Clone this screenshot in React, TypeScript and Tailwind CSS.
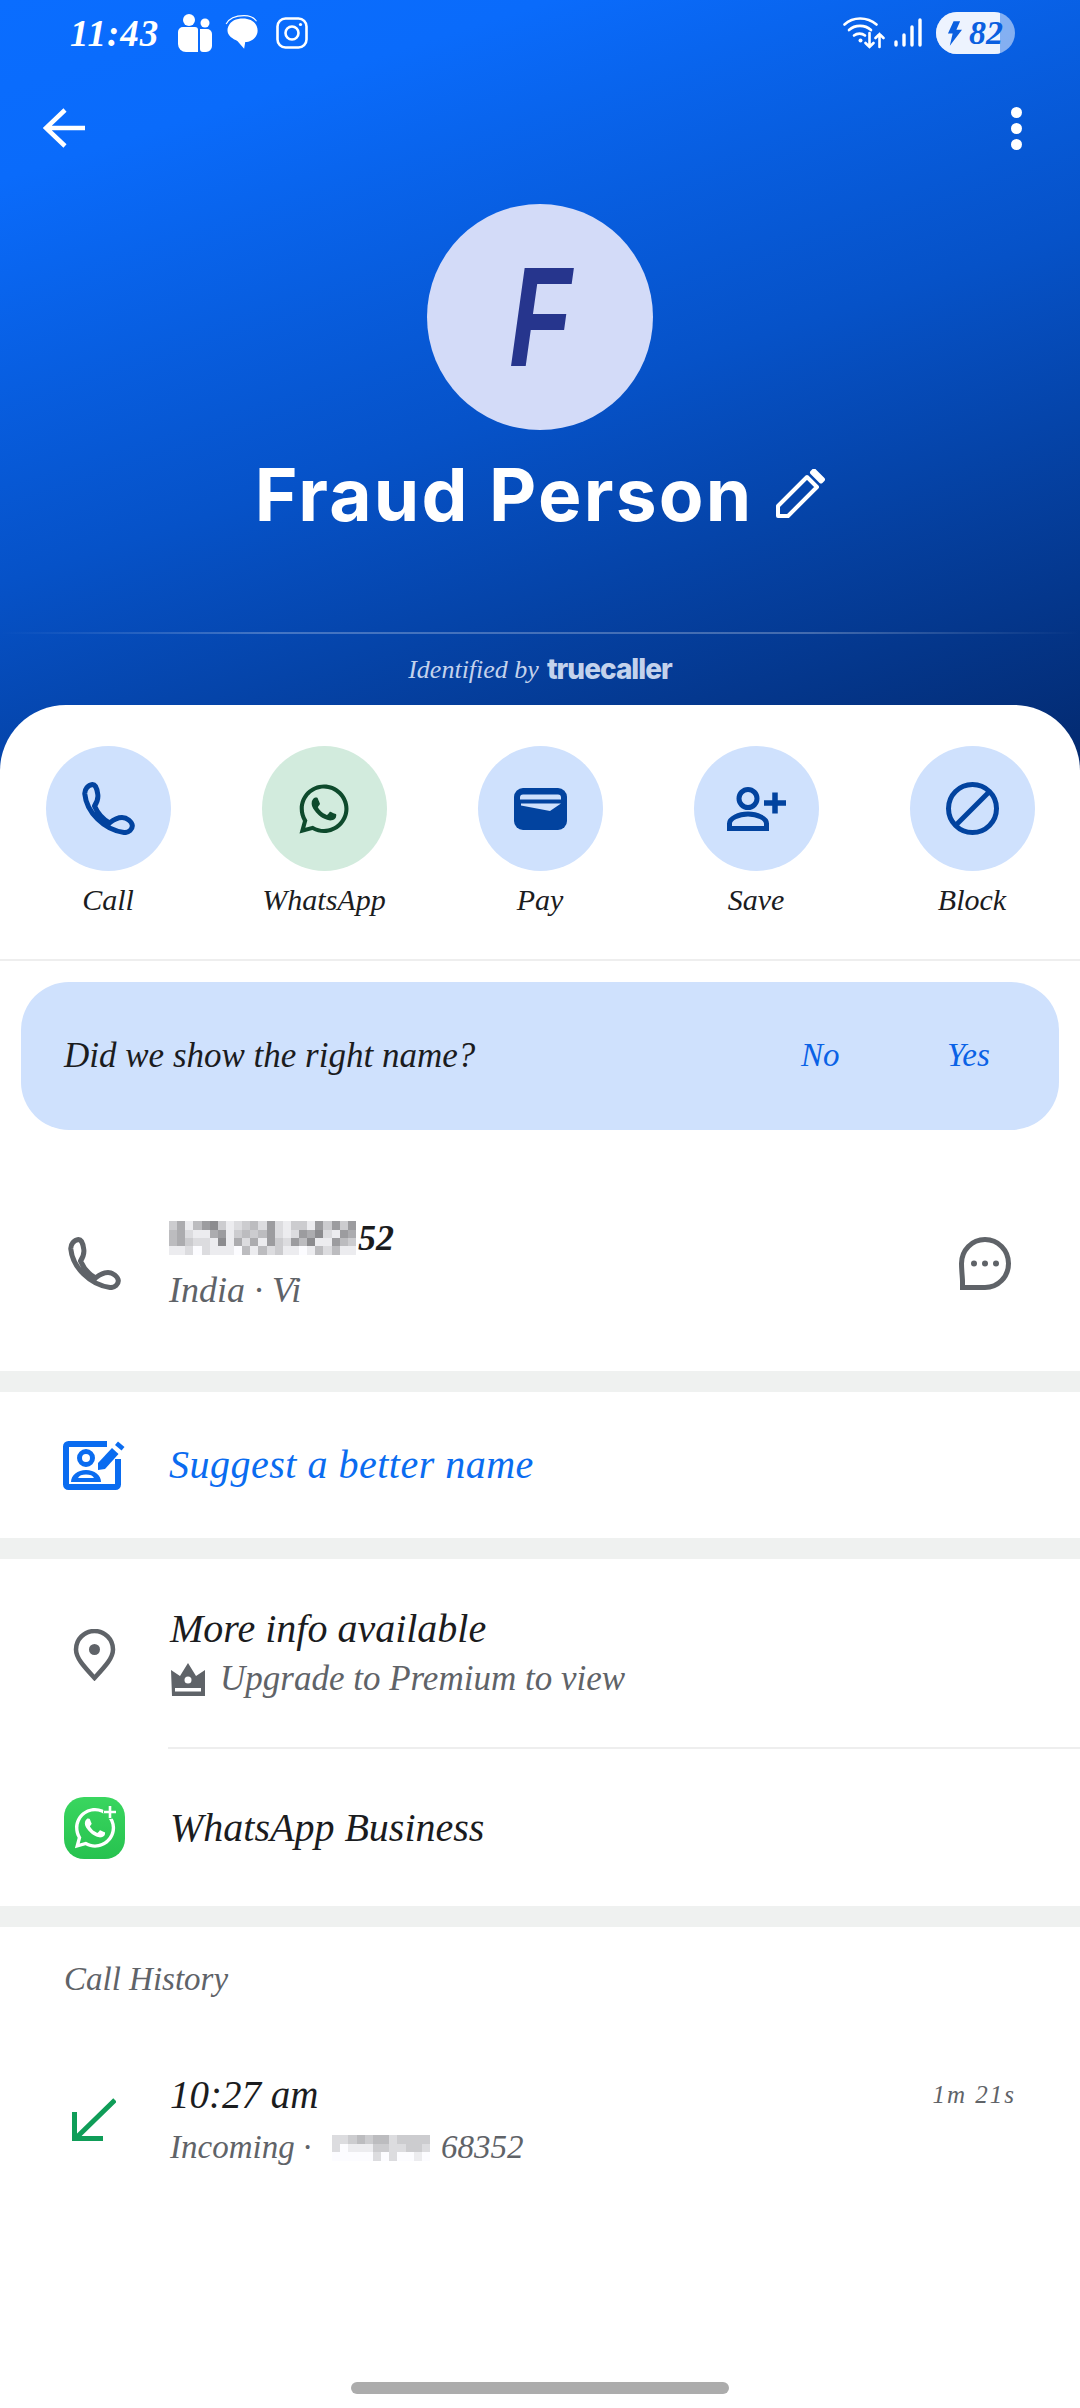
import { FaWhatsapp } from "react-icons/fa";

// gray levels of the blurred number blocks, one hex digit per cell
const numberBlur = [
  "caeb98cedcbd9decce9c9c9",
  "badeea9ecbcb9ded9a8de9a",
  "bacdde8eadae9cd9b8ee9bc",
  "eedfdeeefbebdceefebdbee",
];
const incomingBlur = ["ddcbcbbdcccc", "dfeeeccddccd", "fffffdfdffef"];

function grayOf(digit: string) {
  const v = parseInt(digit, 16);
  const n = Math.round(140 + (v - 8) * 16);
  return `rgb(${n},${n},${Math.min(n + 3, 255)})`;
}

function Blur({ rows, cols }: { rows: string[]; cols: string }) {
  return (
    <div className={cols}>
      {rows.join("").split("").map((c, i) => (
        <div key={i} className="h-[8.4px]" style={{ backgroundColor: grayOf(c) }} />
      ))}
    </div>
  );
}

function PhoneIcon({ className }: { className: string }) {
  return (
    <svg viewBox="0 0 53 53" fill="none" stroke="currentColor" strokeWidth={5} strokeLinejoin="round" className={className}>
      <path d="M10.5 2.5C6 3 2.5 7 2.8 12C4.5 30 22 48 42 50.5C47 51 50.5 47 50.3 43.5C50 40 45 35.5 40 35.5C34 35.5 30 39 27.5 41C20.5 37 15.5 31 12.5 24C14.5 21 16.5 18 15.8 12.5C15.3 8 13.5 2.5 10.5 2.5Z" />
    </svg>
  );
}

function Action({ label, bg, children }: { label: string; bg: string; children: React.ReactNode }) {
  return (
    <div className="flex flex-col items-center">
      <div className={`w-[125px] h-[125px] rounded-full flex items-center justify-center ${bg}`}>{children}</div>
      <div className="mt-[9px] h-[40px] leading-[40px] text-[30px] text-[#1b1c1e]">{label}</div>
    </div>
  );
}

function Band() {
  return <div className="h-[21px] bg-[#eff1f0]" />;
}

export default function App() {
  return (
    <div className="w-[1080px] h-[2408px] overflow-hidden bg-white font-['Liberation_Serif',serif] italic flex flex-col relative">
      <header className="h-[770px] shrink-0 bg-[linear-gradient(162deg,#0a6dff_0%,#0a6bfb_16%,#0652c8_52%,#03296e_100%)] text-white">
        {/* status bar */}
        <div className="h-[66px] flex items-center justify-between pl-[70px] pr-[65px]">
          <div className="flex items-center">
            <span className="w-[92px] text-[37px] leading-none tracking-[1px] font-bold">11:43</span>
            <svg viewBox="0 0 34 38" className="w-[34px] h-[38px] ml-[16px]" fill="white">
              <circle cx="11" cy="6" r="6" />
              <circle cx="27" cy="9" r="4.5" />
              <path d="M0 18a5 5 0 0 1 5-5h12a3 3 0 0 1 3 3v22h-12a8 8 0 0 1-8-8z" />
              <path d="M22 15h7a5 5 0 0 1 5 5v12a6 6 0 0 1-6 6h-3c-2 0-3-1-3-3z" />
            </svg>
            <svg viewBox="0 0 32 32" className="w-[36px] h-[36px] ml-[13px]" fill="white">
              <path d="M3 10C5 5 10 3 16 3c7 0 13 4 13 11 0 6-6 10-11 10l-1 6-6-7C6 21 0 17 3 10Z" />
              <path d="M1 8C4 2 10 0.500 17 0.500c5 0 9 2 11 5" fill="none" stroke="white" strokeWidth="1" />
            </svg>
            <svg viewBox="0 0 32 32" className="w-[32px] h-[32px] ml-[15px]" fill="none" stroke="white" strokeWidth="2.600">
              <rect x="1.500" y="1.500" width="29" height="29" rx="8" />
              <circle cx="16" cy="16" r="6.500" />
              <circle cx="24.500" cy="7.500" r="1.600" fill="white" stroke="none" />
            </svg>
          </div>
          <div className="flex items-center">
            <svg viewBox="0 0 42 34" className="w-[42px] h-[34px]" fill="none" stroke="white" strokeWidth="2.600" strokeLinecap="round">
              <path d="M1.500 8.500C10 .5 24 .5 33.500 8.500" />
              <path d="M6 14c6-5.500 16-5.500 22 0" />
              <path d="M11 19.500c3-2.500 8-2.500 11 0" />
              <circle cx="17.500" cy="24.500" r="2" fill="white" stroke="none" />
              <path d="M26.500 17v14M22.500 27l4 4 4-4M36.500 31V18M32.500 22l4-4 4 4" />
            </svg>
            <svg viewBox="0 0 28 30" className="w-[28px] h-[30px] ml-[9px]" fill="none" stroke="white" strokeWidth="3.400" strokeLinecap="round">
              <path d="M2 27v-3M10 27V17M18 27V9M26 27V2" />
            </svg>
            <div className="ml-[14px] w-[79px] h-[42px] rounded-full overflow-hidden flex bg-white/50">
              <div className="w-[64px] h-full bg-[#edf3fe] flex items-center pl-[11px] gap-[7px] text-[#0a5fe0]">
                <svg viewBox="0 0 16 26" className="w-[15px] h-[25px] shrink-0" fill="currentColor">
                  <path d="M7 0h7l-4 9h6L3 26l3-13H1z" />
                </svg>
                <span className="text-[34px] font-bold leading-none">82</span>
              </div>
            </div>
          </div>
        </div>

        {/* nav */}
        <div className="mt-[30px] h-[64px] flex items-center justify-between pl-[43px] pr-[58px]">
          <svg viewBox="0 0 42 40" className="w-[42px] h-[40px]" fill="none" stroke="white" strokeWidth="4.500">
            <path d="M42 20H3M22 2 3 20l19 18" />
          </svg>
          <div className="flex flex-col gap-[5px]">
            <div className="w-[11px] h-[11px] rounded-full bg-white" />
            <div className="w-[11px] h-[11px] rounded-full bg-white" />
            <div className="w-[11px] h-[11px] rounded-full bg-white" />
          </div>
        </div>

        {/* avatar */}
        <div className="mt-[44px] mx-auto w-[226px] h-[226px] rounded-full bg-[#d3dbf8] flex items-center justify-center text-[#26358d] text-[142px] font-['Liberation_Sans',sans-serif] font-bold leading-none">
          <span className="inline-block scale-x-[0.72]">F</span>
        </div>

        {/* name */}
        <div className="mt-[20px] h-[88px] flex items-center justify-center gap-[22px] not-italic">
          <h1 className="font-['Inter',sans-serif] text-[73px] font-bold leading-none tracking-[2.2px]">Fraud Person</h1>
          <svg viewBox="0 0 50 50" className="w-[50px] h-[50px]" fill="none" stroke="white" strokeWidth="4" strokeLinejoin="round">
            <path d="M3 47V37L32 8l10 10-29 29Z" />
            <path d="M37 3.500l2-2 9 9-2 2z" fill="white" />
          </svg>
        </div>

        <div className="mt-[94px] h-[2px] bg-[linear-gradient(90deg,transparent,rgba(255,255,255,0.25)_25%,rgba(255,255,255,0.25)_75%,transparent)]" />

        <div className="mt-[15px] h-[40px] flex items-center justify-center gap-[8px] text-[#c3d2ec]">
          <span className="text-[26px]">Identified by</span>
          <span className="not-italic font-['Inter',sans-serif] font-extrabold text-[28px] tracking-[-1px]">truecaller</span>
        </div>
      </header>

      <main className="-mt-[65px] relative bg-white rounded-t-[66px] flex-1 flex flex-col">
        <section className="pt-[41px] h-[256px] border-b-2 border-[#eeeeee] grid grid-cols-5 items-start">
          <Action label="Call" bg="bg-[#cfe1fd]">
            <PhoneIcon className="w-[53px] h-[53px] text-[#02439f]" />
          </Action>
          <Action label="WhatsApp" bg="bg-[#d2ebdd]">
            <FaWhatsapp className="w-[56px] h-[56px] text-[#0e4a2c]" />
          </Action>
          <Action label="Pay" bg="bg-[#cfe1fd]">
            <svg viewBox="0 0 53 42" className="w-[53px] h-[42px]">
              <rect width="53" height="42" rx="9" fill="#02439f" />
              <path d="M6 9.500a3 3 0 0 1 3-3h35a3 3 0 0 1 3 3v2H6z" fill="#cfe1fd" />
              <path d="M7 15.500 47 15.500 36 23 7 17.500z" fill="#cfe1fd" />
            </svg>
          </Action>
          <Action label="Save" bg="bg-[#cfe1fd]">
            <svg viewBox="0 0 59 44" className="w-[59px] h-[44px]" fill="none" stroke="#02439f" strokeWidth="5">
              <circle cx="21" cy="11.500" r="9" />
              <path d="M2.500 41.500v-5c0-5 9-9.500 18.500-9.500s18.500 4.500 18.500 9.500v5z" />
              <path d="M37 16h22M48 5.500v21" strokeWidth="5.500" />
            </svg>
          </Action>
          <Action label="Block" bg="bg-[#cfe1fd]">
            <svg viewBox="0 0 53 53" className="w-[53px] h-[53px]" fill="none" stroke="#02439f" strokeWidth="5">
              <circle cx="26.500" cy="26.500" r="24" />
              <path d="M10 43 43 10" />
            </svg>
          </Action>
        </section>

        <section className="mt-[21px] mx-[21px] h-[148px] rounded-[48px] bg-[#cfe1fd] flex items-center pl-[43px] text-[35px]">
          <span className="text-[#1b1c1e] flex-1">Did we show the right name?</span>
          <span className="text-[#0a62e6] w-[146px] text-[33px]">No</span>
          <span className="text-[#0a62e6] w-[112px] text-[33px]">Yes</span>
        </section>

        {/* number */}
        <section className="h-[241px] pt-[84px] pl-[68px] pr-[69px] flex items-start">
          <PhoneIcon className="w-[53px] h-[53px] mt-[23px] text-[#5f6368]" />
          <div className="ml-[48px] flex-1">
            <div className="h-[48px] flex items-center">
              <Blur rows={numberBlur} cols="w-[187px] grid grid-cols-[repeat(23,1fr)]" />
              <span className="ml-[2px] text-[36px] font-bold text-[#1b1c1e]">52</span>
            </div>
            <div className="mt-[2px] h-[52px] leading-[52px] text-[36px] text-[#5f6368]">India · Vi</div>
          </div>
          <svg viewBox="0 0 52 53" className="w-[52px] h-[53px] mt-[23px]" fill="none" stroke="#5f6368" strokeWidth="5">
            <path d="M26 2.500c13 0 23.500 10.500 23.500 24S39 50.500 26 50.500H3.500V44C3.500 41 2.500 33 2.500 26.500 2.500 13 13 2.500 26 2.500Z" />
            <circle cx="15" cy="26.500" r="3" fill="#5f6368" stroke="none" />
            <circle cx="26" cy="26.500" r="3" fill="#5f6368" stroke="none" />
            <circle cx="37" cy="26.500" r="3" fill="#5f6368" stroke="none" />
          </svg>
        </section>
        <Band />

        {/* suggest */}
        <section className="h-[146px] pl-[63px] flex items-center">
          <svg viewBox="0 0 62 49" className="w-[62px] h-[49px]">
            <path d="M44 3H5.500A2.500 2.500 0 0 0 3 5.500v38A2.500 2.500 0 0 0 5.500 46h47a2.500 2.500 0 0 0 2.500-2.500V18" fill="none" stroke="#0a6cf0" strokeWidth="6" />
            <circle cx="23" cy="17" r="6.500" fill="none" stroke="#0a6cf0" strokeWidth="5" />
            <path d="M8 41c0-7 6.500-12 15-12s15 5 15 12z" fill="#0a6cf0" />
            <path d="M15 37c1-2.500 4-3.500 8-3.500s7 1 8 3.500z" fill="white" />
            <path d="M35 22 49 7l6.500 6L42 28l-7 1z" fill="#0a6cf0" />
            <path d="M52 4l3-3.500 6.500 5.500-3 3.500z" fill="#0a6cf0" />
          </svg>
          <span className="ml-[44px] text-[40px] text-[#0a6cf0] tracking-[0.5px]">Suggest a better name</span>
        </section>
        <Band />

        {/* more info */}
        <section className="pt-[48px]">
          <div className="flex pl-[73px]">
            <svg viewBox="0 0 42 52" className="w-[43px] h-[52px] mt-[22px]" fill="none" stroke="#5f6368" strokeWidth="4.500">
              <path d="M21 49C10 37 2.500 29 2.500 20.500a18.500 18.500 0 0 1 37 0C39.500 29 32 37 21 49Z" />
              <circle cx="21" cy="20.500" r="5.500" fill="#5f6368" stroke="none" />
            </svg>
            <div className="ml-[54px] flex-1">
              <div className="h-[44px] leading-[44px] text-[40px] text-[#1b1c1e]">More info available</div>
              <div className="mt-[6px] h-[44px] flex items-center">
                <svg viewBox="0 0 36 36" className="w-[36px] h-[36px]">
                  <path d="M1 9l9 6 8-13 8 13 9-6v26H2z" fill="#5f6368" />
                  <rect x="5" y="27" width="26" height="3.500" fill="white" />
                  <circle cx="18" cy="19" r="3.500" fill="white" />
                </svg>
                <span className="ml-[14px] text-[35px] text-[#5f6368]">Upgrade to Premium to view</span>
              </div>
            </div>
          </div>
        </section>
        <div className="mt-[46px] ml-[168px] h-[2px] bg-[#eeeeee]" />
        <section className="h-[157px] pl-[64px] flex items-center">
          <div className="w-[61px] h-[62px] rounded-[20px] bg-[linear-gradient(180deg,#39d65f,#27c24f)] flex items-center justify-center relative">
            <FaWhatsapp className="w-[46px] h-[46px] text-white" />
            <span className="absolute top-[8px] right-[8px] w-[14px] h-[14px] bg-[#35d05c] rounded-full" />
            <svg viewBox="0 0 14 14" className="absolute top-[8px] right-[8px] w-[14px] h-[14px]" stroke="white" strokeWidth="2.600">
              <path d="M7 1v12M1 7h12" />
            </svg>
          </div>
          <span className="ml-[45px] text-[40px] text-[#1b1c1e]">WhatsApp Business</span>
        </section>
        <Band />

        {/* call history */}
        <section className="pt-[32px] pl-[64px] pr-[64px]">
          <div className="h-[40px] leading-[40px] text-[33px] text-[#5f6368]">Call History</div>
          <div className="mt-[74px] flex">
            <svg viewBox="0 0 44 43" className="w-[44px] h-[43px] ml-[8px] mt-[25px]" fill="none" stroke="#0f9d58" strokeWidth="5">
              <path d="M43 2 4 40M2.500 14v26.500H31" />
            </svg>
            <div className="ml-[54px] flex-1">
              <div className="flex justify-between">
                <div className="h-[44px] leading-[44px] text-[39px] text-[#1b1c1e]">10:27 am</div>
                <div className="h-[44px] leading-[44px] text-[25px] text-[#5f6368] tracking-[2px]">1m 21s</div>
              </div>
              <div className="mt-[9px] h-[44px] flex items-center text-[33px] text-[#5f6368]">
                <span className="w-[162px]">Incoming ·</span>
                <Blur rows={incomingBlur} cols="w-[98px] grid grid-cols-[repeat(12,1fr)]" />
                <span className="ml-[11px]">68352</span>
              </div>
            </div>
          </div>
        </section>
      </main>

      <div className="absolute left-[351px] top-[2382px] w-[378px] h-[12px] rounded-full bg-[#acacac]" />
    </div>
  );
}
